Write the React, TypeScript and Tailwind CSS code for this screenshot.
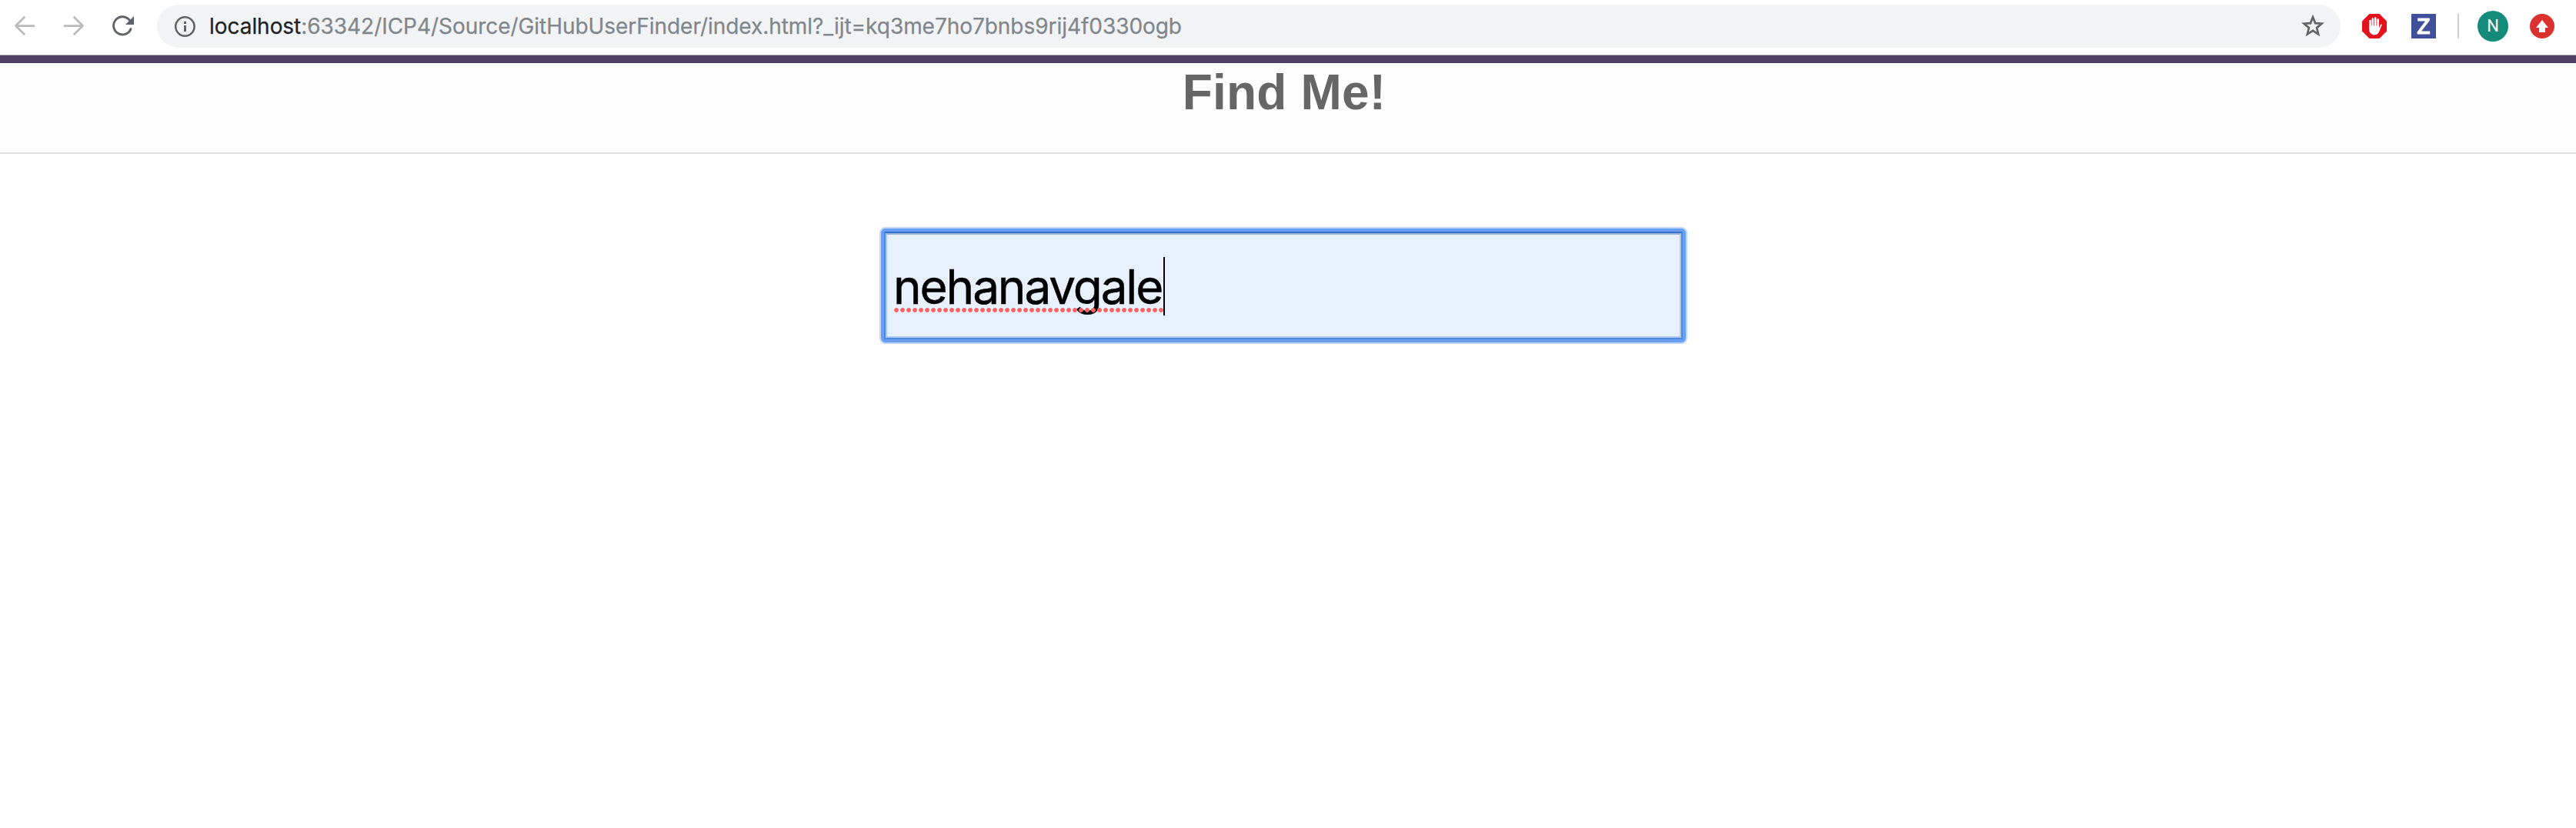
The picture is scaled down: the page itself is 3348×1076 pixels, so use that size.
import React from "react";

function Toolbar() {
  return (
    <div className="flex h-[72px] items-center border-b border-[#b1b0b5] bg-white pb-[3px]">
      <svg className="ml-[18px] h-[28px] w-[28px] shrink-0" viewBox="0 0 28 28" fill="none" stroke="#bababc" strokeWidth="2.8" strokeLinecap="round">
        <path d="M26 13.6H2.5M13.5 2.5 2.5 13.6l11 11" />
      </svg>
      <svg className="ml-[36px] h-[28px] w-[28px] shrink-0" viewBox="0 0 28 28" fill="none" stroke="#bababc" strokeWidth="2.8" strokeLinecap="round">
        <path d="M2 13.6h23.5M14.5 2.5l11 11.1-11 11" />
      </svg>
      <svg className="ml-[36px] h-[28px] w-[28px] shrink-0" viewBox="0 0 28 28">
        <path d="M24 17.6A11.6 11.6 0 1 1 22 5.8" fill="none" stroke="#5f6368" strokeWidth="2.9" strokeLinecap="round" />
        <path d="M28 1v11H17z" fill="#5f6368" />
      </svg>
      <div className="ml-[30px] flex h-[56px] w-[2838px] shrink-0 items-center rounded-full bg-[#f1f3f4]">
        <svg className="ml-[23px] h-[28px] w-[28px] shrink-0" viewBox="0 0 28 28">
          <circle cx="13.4" cy="14.5" r="12.2" fill="none" stroke="#5f6368" strokeWidth="2.6" />
          <path d="M12 8h3v3h-3zM12 13h3v8h-3z" fill="#5f6368" />
        </svg>
        <div className="ml-[17px] whitespace-pre font-['Inter',sans-serif] text-[28px] leading-[36px] tracking-[-0.045px] text-[#80868b] [-webkit-text-stroke:0.25px]">
          <span className="text-[#202124]">localhost</span>:63342/ICP4/Source/GitHubUserFinder/index.html?_ijt=kq3me7ho7bnbs9rij4f0330ogb
        </div>
        <svg className="ml-auto mr-[21px] h-[30px] w-[30px] shrink-0" viewBox="0 0.7 30 30">
          <path d="M15 4l3.1 7.8 8.4.6-6.4 5.4 2 8.2-7.1-4.4L7.9 26l2-8.2-6.4-5.4 8.4-.6z" fill="none" stroke="#5f6368" strokeWidth="2.7" />
        </svg>
      </div>
      <svg className="ml-[28px] h-[32px] w-[32px] shrink-0" viewBox="0 0 32 32">
        <path d="M9.5 0h13L32 9.5v13L22.5 32h-13L0 22.5v-13z" fill="#e4121d" />
        <path d="M10.5 18V9M13.8 18V6.5M17.2 18V5.5M20.6 18V7.5" stroke="#fff" strokeWidth="2.6" strokeLinecap="round" />
        <path d="M9.2 15.5h12.7v3l2-4.5c.5-1 2-.7 1.8.4l-3.5 8.5c-1.2 3-3 4.3-6 4.3-4.3 0-7-2.7-7-7z" fill="#fff" />
      </svg>
      <svg className="ml-[32px] h-[32px] w-[32px] shrink-0" viewBox="0 0 32 32">
        <path d="M0 0h32v32H0z" fill="#41509b" />
        <path d="M8.2 5.5h15.6v3.2L13.2 22.6h11v4H7.6v-3.2L18.2 9.5h-10z" fill="#fff" />
      </svg>
      <div className="ml-[28px] h-[32px] w-[2px] shrink-0 bg-[#cfcfd0]" />
      <div className="ml-[24px] flex h-[40px] w-[40px] shrink-0 items-center justify-center rounded-full bg-[#148a7a] font-['Roboto',sans-serif] text-[22px] leading-none text-white">N</div>
      <svg className="ml-[28px] h-[32px] w-[32px] shrink-0" viewBox="0 0 32 32">
        <circle cx="16" cy="16" r="16" fill="#db322f" />
        <path d="M16 8l8 10h-4v6h-8v-6H8z" fill="#fff" />
      </svg>
    </div>
  );
}

function SearchBox() {
  return (
    <div className="mx-auto mt-[95px] w-fit pr-[12px]">
      <div className="rounded-[8px] border-2 border-[#bfd7fb] bg-[#689ff5]">
        <div className="rounded-[6px] border-4 border-[#689ff5]">
          <div className="border-2 border-[#4d88e3] border-t-[#3a6fc4]">
            <div className="flex h-[136px] w-[1034px] items-start border-2 border-[#adc9f3] border-t-[#93b3df] bg-[#e8effd] pl-[9px] pt-[28px]">
              <div className="relative h-[80px] w-[350px]">
                <span className="-ml-px whitespace-pre font-['Inter',sans-serif] text-[62px] leading-[80px] tracking-[-2.1px] text-black [-webkit-text-stroke:0.5px]">nehanavgale</span>
                <div className="absolute left-0 top-[67px] h-[6px] w-[350px] bg-[radial-gradient(circle_at_3px_3px,#f96464_2.5px,transparent_3.2px)] bg-[length:8px_6px]" />
              </div>
              <div className="mt-px h-[76px] w-[2px] bg-black" />
            </div>
          </div>
        </div>
      </div>
    </div>
  );
}

export default function App() {
  return (
    <div className="h-[1076px] w-[3348px] overflow-hidden bg-white">
      <Toolbar />
      <header className="flex h-[128px] justify-center border-b-2 border-t-10 border-b-[#e1e1e1] border-t-[#4c4063] bg-[#fdfdfd]">
        <h1 className="mr-[10px] font-['Liberation_Sans',sans-serif] text-[64px] font-bold leading-[77px] tracking-[0.2px] text-[#666666]">Find Me!</h1>
      </header>
      <SearchBox />
    </div>
  );
}
